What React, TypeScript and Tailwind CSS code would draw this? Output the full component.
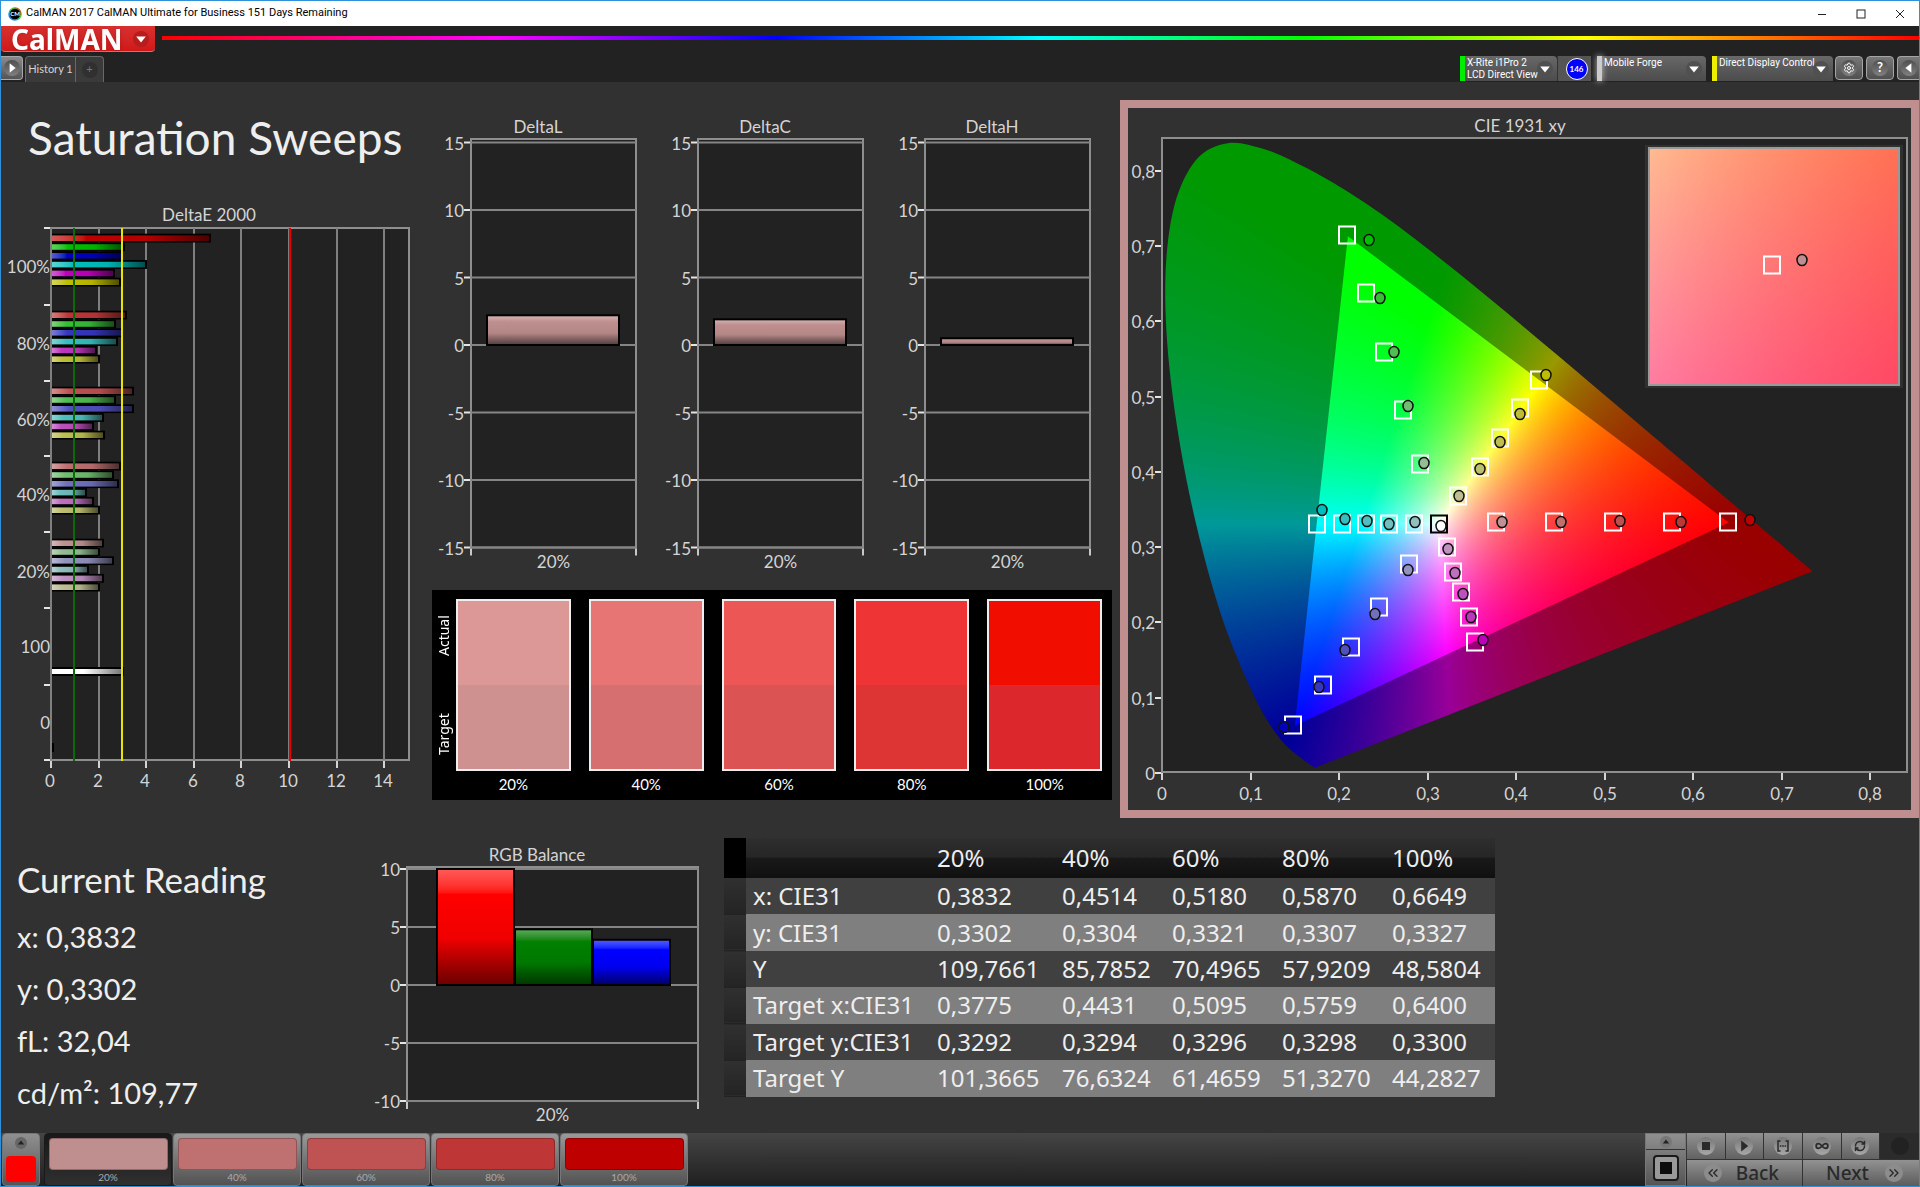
import { useEffect, useRef } from "react";
import type { ReactNode } from "react";
import { ChevronsLeft, ChevronsRight, Infinity as InfinityIcon, RefreshCw, Settings } from "lucide-react";

type Column = { x: number; w: number; value: number; color: string };
type Point = [number, number];

const LEVELS = ["20%", "40%", "60%", "80%", "100%"];

// Low channel of the stimulus colour per saturation level, 100% first
const LOW_CHANNEL = [0, 54, 80, 112, 146];
const HUES = [
	[1, 0, 0],
	[0, 1, 0],
	[0, 0, 1],
	[0, 1, 1],
	[1, 0, 1],
	[1, 1, 0],
];

const stimulus = (hue: number, level: number) =>
	`rgb(${HUES[hue].map((on) => (on ? 190 : LOW_CHANNEL[level])).join(",")})`;

const DELTA_E = [
	{ label: "100%", y: 238, ends: [210, 124, 122, 146, 114, 120] },
	{ label: "80%", y: 315, ends: [126, 115, 122, 117, 96, 99] },
	{ label: "60%", y: 391, ends: [133, 115, 133, 103, 93, 104] },
	{ label: "40%", y: 466, ends: [120, 113, 118, 86, 93, 99] },
	{ label: "20%", y: 543, ends: [103, 99, 113, 88, 103, 99] },
];

const TABLE_ROWS = [
	{ label: "x: CIE31", values: ["0,3832", "0,4514", "0,5180", "0,5870", "0,6649"] },
	{ label: "y: CIE31", values: ["0,3302", "0,3304", "0,3321", "0,3307", "0,3327"] },
	{ label: "Y", values: ["109,7661", "85,7852", "70,4965", "57,9209", "48,5804"] },
	{ label: "Target x:CIE31", values: ["0,3775", "0,4431", "0,5095", "0,5759", "0,6400"] },
	{ label: "Target y:CIE31", values: ["0,3292", "0,3294", "0,3296", "0,3298", "0,3300"] },
	{ label: "Target Y", values: ["101,3665", "76,6324", "61,4659", "51,3270", "44,2827"] },
];

const SWATCHES = [
	{ actual: "bg-[#dc9896]", target: "bg-[#cf9190]", step: "bg-[#bf8f8f]" },
	{ actual: "bg-[#e67573]", target: "bg-[#d67070]", step: "bg-[#bf7070]" },
	{ actual: "bg-[#ec5755]", target: "bg-[#db5352]", step: "bg-[#bf5252]" },
	{ actual: "bg-[#ee3434]", target: "bg-[#dd3534]", step: "bg-[#bf3636]" },
	{ actual: "bg-[#f10d00]", target: "bg-[#dc272c]", step: "bg-[#bf0000]" },
];

const LOCUS: Point[] = [
	[0.1741, 0.005], [0.1714, 0.0051], [0.1644, 0.0109], [0.1566, 0.0177], [0.144, 0.0297],
	[0.1355, 0.0399], [0.1241, 0.0578], [0.1096, 0.0868], [0.0913, 0.1327], [0.0687, 0.2007],
	[0.0454, 0.295], [0.0235, 0.4127], [0.0082, 0.5384], [0.0039, 0.6548], [0.0139, 0.7502],
	[0.0389, 0.812], [0.0743, 0.8338], [0.1142, 0.8262], [0.1547, 0.8059], [0.1929, 0.7816],
	[0.2296, 0.7543], [0.2658, 0.7243], [0.3016, 0.6923], [0.3373, 0.6589], [0.3731, 0.6245],
	[0.4087, 0.5896], [0.4441, 0.5547], [0.4788, 0.5202], [0.5125, 0.4866], [0.5448, 0.4544],
	[0.5752, 0.4242], [0.627, 0.3725], [0.6658, 0.334], [0.6915, 0.3083], [0.719, 0.2809],
	[0.7347, 0.2653],
];

const GAMUT: Point[] = [[0.64, 0.33], [0.21, 0.71], [0.15, 0.06]];

// Marker positions in chart units, 100% first, in the order of HUES
const TARGETS: Point[][] = [
	[[1728, 522], [1672, 522], [1613, 522], [1554, 522], [1496, 522]],
	[[1347, 235], [1366, 293], [1384, 352], [1403, 410], [1420, 464]],
	[[1293, 725], [1323, 685], [1351, 647], [1379, 607], [1409, 564]],
	[[1317, 524], [1342, 524], [1366, 524], [1389, 524], [1414, 524]],
	[[1475, 642], [1469, 617], [1461, 592], [1453, 572], [1447, 547]],
	[[1539, 380], [1520, 408], [1500, 438], [1480, 467], [1458, 496]],
];
const MEASURED: Point[][] = [
	[[1750, 520], [1681, 522], [1620, 521], [1561, 522], [1502, 522]],
	[[1369, 240], [1380, 298], [1394, 352], [1408, 406], [1424, 463]],
	[[1284, 727], [1319, 687], [1345, 650], [1375, 614], [1408, 570]],
	[[1322, 510], [1345, 519], [1367, 521], [1389, 524], [1415, 522]],
	[[1483, 640], [1471, 617], [1463, 594], [1455, 573], [1448, 549]],
	[[1546, 375], [1520, 414], [1500, 442], [1480, 469], [1459, 496]],
];

// Brightest displayable linear sRGB colour for a chromaticity
const xyToRgb = (x: number, y: number) => {
	const X = x / Math.max(y, 0.0001);
	const Z = (1 - x - y) / Math.max(y, 0.0001);
	const rgb = [
		3.2406 * X - 1.5372 - 0.4986 * Z,
		-0.9689 * X + 1.8758 + 0.0415 * Z,
		0.0557 * X - 0.204 + 1.057 * Z,
	].map((c) => Math.max(0, c));
	const max = Math.max(...rgb);
	return rgb.map((c) => (c / max) * 255);
};

const Chromaticity = ({
	width,
	height,
	x0,
	y0,
	scaleX,
	scaleY,
	locus = false,
}: {
	width: number;
	height: number;
	x0: number;
	y0: number;
	scaleX: number;
	scaleY: number;
	locus?: boolean;
}) => {
	const ref = useRef<HTMLCanvasElement>(null);

	useEffect(() => {
		const ctx = ref.current?.getContext("2d");
		if (!ctx) {
			return;
		}
		const image = ctx.createImageData(width, height);
		for (let py = 0; py < height; py++) {
			for (let px = 0; px < width; px++) {
				const [r, g, b] = xyToRgb(x0 + px / scaleX, y0 + (height - py) / scaleY);
				image.data.set([r, g, b, 255], (py * width + px) * 4);
			}
		}
		ctx.putImageData(image, 0, 0);
		if (!locus) {
			return;
		}

		const toPx = ([x, y]: Point): Point => [(x - x0) * scaleX, height - (y - y0) * scaleY];
		const outline = new Path2D();
		const pts = LOCUS.map(toPx);
		outline.moveTo(...pts[0]);
		for (let i = 0; i < pts.length - 1; i++) {
			const prev = pts[Math.max(i - 1, 0)];
			const a = pts[i];
			const b = pts[i + 1];
			const next = pts[Math.min(i + 2, pts.length - 1)];
			outline.bezierCurveTo(
				a[0] + (b[0] - prev[0]) / 6,
				a[1] + (b[1] - prev[1]) / 6,
				b[0] - (next[0] - a[0]) / 6,
				b[1] - (next[1] - a[1]) / 6,
				b[0],
				b[1],
			);
		}
		outline.closePath();

		// Darken everything outside the gamut triangle, then cut to the locus
		const outside = new Path2D();
		outside.rect(0, 0, width, height);
		GAMUT.map(toPx).forEach(([x, y], i) => (i ? outside.lineTo(x, y) : outside.moveTo(x, y)));
		outside.closePath();
		ctx.fillStyle = "rgba(0,0,0,0.4)";
		ctx.fill(outside, "evenodd");
		ctx.globalCompositeOperation = "destination-in";
		ctx.fillStyle = "#000";
		ctx.fill(outline);
		ctx.globalCompositeOperation = "source-over";
	}, [width, height, x0, y0, scaleX, scaleY, locus]);

	return <canvas ref={ref} width={width} height={height} className="block" />;
};

const Glossy = ({ id, color, vertical = false }: { id: string; color: string; vertical?: boolean }) => (
	<linearGradient id={id} x1="0" y1="0" x2={vertical ? 0 : 1} y2={vertical ? 1 : 0}>
		<stop offset="0" stopColor={`color-mix(in srgb, ${color}, white 35%)`} />
		<stop offset="0.22" stopColor={color} />
		<stop offset="0.6" stopColor={`color-mix(in srgb, ${color}, black 6%)`} />
		<stop offset="1" stopColor={`color-mix(in srgb, ${color}, black 58%)`} />
	</linearGradient>
);

const DeltaEChart = () => (
	<svg viewBox="1 200 424 610" className="block w-full fill-[#d4d4d4] text-[17px]">
		<text x="209" y="221" textAnchor="middle">DeltaE 2000</text>
		<rect x="51" y="228" width="358" height="532" fill="#222" stroke="#8e8e8e" strokeWidth="2" />
		{[0, 2, 4, 6, 8, 10, 12, 14].map((v) => {
			const x = Math.round(51 + v * 23.8);
			return (
				<g key={v}>
					<line x1={x} x2={x} y1="228" y2="760" stroke="#7f7f7f" strokeWidth="2" />
					<line x1={x} x2={x} y1="761" y2="768" stroke="#d4d4d4" strokeWidth="2" />
					<text x={x - 1} y="787" textAnchor="middle">{v}</text>
				</g>
			);
		})}
		{[228, 305, 381, 456, 532, 608, 685, 760].map((y) => (
			<line key={y} x1="44" x2="50" y1={y} y2={y} stroke="#e4e4e4" strokeWidth="2" />
		))}
		{DELTA_E.map((group, level) => (
			<g key={group.label}>
				<text x="50" y={group.y + 35} textAnchor="end">{group.label}</text>
				{group.ends.map((end, hue) => {
					const id = `de-${level}-${hue}`;
					const y = group.y + hue * 8.8;
					return (
						<g key={id}>
							<Glossy id={id} color={stimulus(hue, level)} />
							<rect x="52" y={y - 4.3} width={end - 51} height="8.8" fill="#000" />
							<rect x="52" y={y - 2.6} width={end - 53} height="5.6" fill={`url(#${id})`} />
						</g>
					);
				})}
			</g>
		))}
		<text x="50" y="653" textAnchor="end">100</text>
		<text x="50" y="729" textAnchor="end">0</text>
		<linearGradient id="de-white">
			<stop offset="0.45" stopColor="#fff" />
			<stop offset="1" stopColor="#777" />
		</linearGradient>
		<rect x="52" y="667" width="72" height="9" fill="#000" />
		<rect x="52" y="669" width="70" height="5" fill="url(#de-white)" />
		<rect x="52" y="743" width="2" height="9" fill="#000" />
		<line x1="74" x2="74" y1="228" y2="761" stroke="#0a6a0a" strokeWidth="2" />
		<line x1="122" x2="122" y1="228" y2="761" stroke="#e8e400" strokeWidth="2" />
		<line x1="290" x2="290" y1="228" y2="761" stroke="#e80000" strokeWidth="2" />
	</svg>
);

const ColumnChart = ({
	title,
	titleX,
	width,
	height,
	left,
	right,
	top,
	zero,
	unit,
	ticks,
	columns,
}: {
	title: string;
	titleX: number;
	width: number;
	height: number;
	left: number;
	right: number;
	top: number;
	zero: number;
	unit: number;
	ticks: number[];
	columns: Column[];
}) => {
	const bottom = zero - ticks[0] * unit;
	const slug = title.replace(" ", "");

	return (
		<svg viewBox={`0 0 ${width} ${height}`} className="block w-full fill-[#d4d4d4] text-[17px]">
			<text x={titleX} y={top - 6} textAnchor="middle">{title}</text>
			<rect x={left} y={top} width={right - left} height={bottom - top} fill="#222" stroke="#8e8e8e" strokeWidth="2" />
			{ticks.map((v) => (
				<g key={v}>
					<line x1={left} x2={right} y1={zero - v * unit} y2={zero - v * unit} stroke="#858585" strokeWidth="2" />
					<line x1={left - 7} x2={left - 1} y1={zero - v * unit} y2={zero - v * unit} stroke="#e4e4e4" strokeWidth="2" />
					<text x={left - 7} y={zero - v * unit + 7} textAnchor="end">{v}</text>
				</g>
			))}
			{[left, right].map((x) => (
				<line key={x} x1={x} x2={x} y1={bottom + 1} y2={bottom + 8} stroke="#c8c8c8" strokeWidth="2" />
			))}
			{columns.map((c, i) => (
				<g key={c.color}>
					<Glossy id={`${slug}-${i}`} color={c.color} vertical />
					<rect
						x={c.x}
						y={zero - c.value * unit}
						width={c.w}
						height={c.value * unit}
						fill={`url(#${slug}-${i})`}
						stroke="#000"
						strokeWidth="2"
					/>
				</g>
			))}
			<text x={(left + right) / 2} y={bottom + 20} textAnchor="middle">20%</text>
		</svg>
	);
};

const Marker = ({ at, color }: { at: Point; color: string }) => (
	<ellipse cx={at[0]} cy={at[1]} rx="5" ry="5.5" fill={color} stroke="#111" strokeWidth="1.5" />
);

const TargetBox = ({ at, color = "#fff" }: { at: Point; color?: string }) => (
	<rect x={at[0] - 8} y={at[1] - 8.5} width="16" height="17" fill="none" stroke={color} strokeWidth="2" />
);

const CieChart = () => (
	<svg viewBox="1128 108 783 702" className="block w-full fill-[#d4d4d4] text-[17px]">
		<text x="1520" y="132" textAnchor="middle">CIE 1931 xy</text>
		<rect x="1162" y="138" width="745" height="634" fill="#222" stroke="#8e8e8e" strokeWidth="2" />
		{[0, 1, 2, 3, 4, 5, 6, 7, 8].map((v) => {
			const x = Math.round(1162 + v * 88.55);
			const y = Math.round(773 - v * 75.3);
			const label = v ? `0,${v}` : "0";
			return (
				<g key={v}>
					<line x1={x} x2={x} y1="773" y2="780" stroke="#d4d4d4" strokeWidth="2" />
					<text x={x} y="800" textAnchor="middle">{label}</text>
					<line x1="1155" x2="1161" y1={y} y2={y} stroke="#e4e4e4" strokeWidth="2" />
					<text x="1155" y={y + 7} textAnchor="end">{label}</text>
				</g>
			);
		})}
		<foreignObject x="1163" y="139" width="743" height="632">
			<Chromaticity width={743} height={632} x0={0.0012} y0={0} scaleX={885.5} scaleY={753} locus />
		</foreignObject>
		{TARGETS.map((points, hue) => points.map((at) => <TargetBox key={`${hue}-${at}`} at={at} />))}
		<TargetBox at={[1439, 524]} color="#000" />
		{MEASURED.map((points, hue) =>
			points.map((at, level) => <Marker key={`${hue}-${at}`} at={at} color={stimulus(hue, level)} />),
		)}
		<Marker at={[1441, 526]} color="#fff" />
		<rect x="1645" y="145" width="258" height="243" fill="#303030" />
		<foreignObject x="1648" y="147" width="252" height="238">
			<Chromaticity width={252} height={238} x0={0.3525} y0={0.3055} scaleX={5040} scaleY={5000} />
		</foreignObject>
		<rect x="1649" y="148" width="250" height="237" fill="none" stroke="#999" strokeWidth="2" />
		<TargetBox at={[1772, 265]} />
		<Marker at={[1802, 260]} color="#bf8f8f" />
	</svg>
);

const Knob = ({ children }: { children: ReactNode }) => (
	<span className="flex size-4 items-center justify-center rounded-full bg-linear-to-b from-[#505050] to-[#808080]">
		{children}
	</span>
);

const Triangle = ({ className }: { className: string }) => (
	<svg viewBox="0 0 10 10" className={className}>
		<path d="M1 3h8L5 8z" fill="currentColor" />
	</svg>
);

const DeviceMenu = ({ children, accent, className }: { children: ReactNode; accent: string; className: string }) => (
	<button
		type="button"
		className={`flex h-[25px] items-stretch rounded-t-sm bg-linear-to-b from-[#686868] to-[#4c4c4c] text-left font-[Roboto,sans-serif] text-[10px] leading-3 text-white ${className}`}
	>
		<span className={`mr-[2px] w-[5px] shrink-0 ${accent}`} />
		<span className="min-w-0 flex-1 pt-[1px] whitespace-nowrap">{children}</span>
		<span className="mr-1 flex size-4 shrink-0 items-center justify-center self-center rounded-full bg-[#505050]">
			<Triangle className="size-3" />
		</span>
	</button>
);

const TOOL_BUTTON =
	"flex h-6 w-7 items-center justify-center rounded-sm border border-[#a5a5a5] bg-linear-to-b from-[#787878] to-[#505050] text-white";

const TitleBar = () => (
	<header className="flex h-[25px] items-center bg-white pl-[7px] text-black">
		<svg viewBox="0 0 14 14" className="mr-1 size-[14px]">
			<defs>
				<linearGradient id="ring" x1="0" y1="1" x2="1" y2="0">
					<stop offset="0" stopColor="#2040ff" />
					<stop offset="0.35" stopColor="#00c8d0" />
					<stop offset="0.6" stopColor="#40d020" />
					<stop offset="1" stopColor="#f02020" />
				</linearGradient>
			</defs>
			<circle cx="7" cy="7" r="6" fill="#000" stroke="url(#ring)" strokeWidth="1.5" />
			<text x="7" y="9" textAnchor="middle" fill="#fff" className="text-[6px] font-bold">CM</text>
		</svg>
		<h1 className="flex-1 font-[Roboto,sans-serif] text-[11px]">
			CalMAN 2017 CalMAN Ultimate for Business 151 Days Remaining
		</h1>
		<div className="flex gap-[9px] pr-1">
			<button type="button" aria-label="Minimize" className="flex h-6 w-[30px] items-center justify-center">
				<svg viewBox="0 0 10 10" className="size-[10px]" stroke="#222" fill="none"><path d="M1 5.5h8" /></svg>
			</button>
			<button type="button" aria-label="Maximize" className="flex h-6 w-[30px] items-center justify-center">
				<svg viewBox="0 0 10 10" className="size-[10px]" stroke="#222" fill="none"><rect x="1" y="1" width="8" height="8" /></svg>
			</button>
			<button type="button" aria-label="Close" className="flex h-6 w-[30px] items-center justify-center">
				<svg viewBox="0 0 10 10" className="size-[10px]" stroke="#222" fill="none"><path d="M1 1l8 8M9 1L1 9" /></svg>
			</button>
		</div>
	</header>
);

const Toolbar = () => (
	<div className="bg-[#222]">
		<div className="flex h-[26px] items-start gap-[7px]">
			<button
				type="button"
				className="flex h-[26px] w-[154px] items-center justify-between rounded-b-sm border-b border-[#b08080] bg-linear-to-b from-[#d83030] to-[#d01818] pr-[6px] pl-[10px] font-['Noto_Sans',sans-serif] text-[28px] leading-none font-bold text-white"
			>
				<span className="drop-shadow-sm">CalMAN</span>
				<span className="flex size-4 items-center justify-center rounded-full bg-[#b81c1c]">
					<Triangle className="size-3" />
				</span>
			</button>
			<div className="mt-[10px] h-1 flex-1 bg-[linear-gradient(90deg,#f00_0%,#f0f_19%,#00f_35%,#0ff_50%,#0f0_65%,#ff0_81%,#f00_100%)]" />
		</div>
		<div className="flex h-[30px] items-end justify-between">
			<div className="flex h-[26px] items-start gap-[2px]">
				<button
					type="button"
					aria-label="Expand"
					className="flex h-6 w-[22px] items-center justify-center rounded-r-sm border border-l-0 border-[#a8a8a8] bg-linear-to-b from-[#8a8a8a] to-[#555] text-white"
				>
					<Knob><Triangle className="size-3 -rotate-90" /></Knob>
				</button>
				<div className="flex h-[26px] rounded-t-sm border border-b-0 border-[#686868] bg-[#3a3a3a] text-[11px] text-[#d4d4d4]">
					<button type="button" className="w-[50px] border-r border-[#686868] text-center whitespace-nowrap">History 1</button>
					<button type="button" aria-label="Add history" className="flex w-[27px] items-center justify-center">
						<span className="flex size-4 items-center justify-center rounded-full bg-[#303030] text-[#777]">+</span>
					</button>
				</div>
			</div>
			<div className="flex h-[26px] items-start">
				<DeviceMenu accent="bg-[#0e0]" className="w-[97px]">
					X-Rite i1Pro 2<br />LCD Direct View
				</DeviceMenu>
				<span className="flex h-[25px] w-[34px] items-center justify-center border-l border-[#333] bg-[#555] pl-1">
					<span className="flex size-[22px] items-center justify-center rounded-full border border-white bg-[#00f] text-[8px] font-bold text-white">
						146
					</span>
				</span>
				<DeviceMenu accent="bg-[#ccc] shadow-[0_0_6px_#ccc]" className="ml-[6px] w-[109px]">Mobile Forge</DeviceMenu>
				<DeviceMenu accent="bg-[#ee0]" className="ml-[6px] w-[121px]">Direct Display Control</DeviceMenu>
				<div className="ml-[2px] flex gap-[3px]">
					<button type="button" aria-label="Settings" className={TOOL_BUTTON}>
						<Knob><Settings className="size-3" /></Knob>
					</button>
					<button type="button" className={`${TOOL_BUTTON} text-[13px] font-bold`}>
						<Knob>?</Knob>
					</button>
					<button
						type="button"
						aria-label="Collapse"
						className="flex h-6 w-[22px] items-center justify-center rounded-l-sm border border-r-0 border-[#a5a5a5] bg-linear-to-b from-[#787878] to-[#505050] text-white"
					>
						<Knob><Triangle className="size-3 rotate-90" /></Knob>
					</button>
				</div>
			</div>
		</div>
	</div>
);

const ColorCompare = () => (
	<div className="mr-[1px] ml-[7px] flex h-[210px] bg-black pt-[9px] pr-[10px] text-[15px] text-white">
		<div className="flex h-[172px] w-6 shrink-0 rotate-180 items-center justify-between px-4 font-['Noto_Sans',sans-serif] text-[14px] leading-5 [writing-mode:vertical-rl]">
			<span>Target</span>
			<span>Actual</span>
		</div>
		<div className="grid flex-1 grid-cols-5 gap-[18px]">
			{SWATCHES.map((s, i) => (
				<div key={LEVELS[i]} className="text-center">
					<div className="flex h-[172px] flex-col border-2 border-[#eee]">
						<div className={`flex-1 ${s.actual}`} />
						<div className={`flex-1 ${s.target}`} />
					</div>
					<div className="leading-[26px]">{LEVELS[i]}</div>
				</div>
			))}
		</div>
	</div>
);

const ReadingsTable = () => (
	<table className="h-[259px] border-collapse font-['Noto_Sans',sans-serif] text-[24px] leading-8 text-[#eee]">
		<thead>
			<tr className="h-10 bg-[linear-gradient(#2e2e2e_0%,#262626_48%,#191919_50%,#101010_100%)]">
				<td className="w-[22px] bg-black" />
				<td className="w-[184px]" />
				{LEVELS.map((level, i) => (
					<th key={level} className={`pl-[7px] text-left font-normal ${i === 0 ? "w-[125px]" : "w-[110px]"}`}>
						{level}
					</th>
				))}
			</tr>
		</thead>
		<tbody>
			{TABLE_ROWS.map((row, i) => (
				<tr key={row.label} className={i % 2 ? "bg-[#7f7f7f]" : "bg-[#404040]"}>
					<td className="border-b border-[#222] bg-linear-to-b from-[#303030] to-[#242424]" />
					<th className="pl-[7px] text-left font-normal whitespace-nowrap">{row.label}</th>
					{row.values.map((value, col) => (
						<td key={col} className="pl-[7px]">{value}</td>
					))}
				</tr>
			))}
		</tbody>
	</table>
);

const StepButton = ({ label, color, active }: { label: string; color: string; active: boolean }) => (
	<button
		type="button"
		className={`flex h-[53px] w-32 flex-col items-center rounded-sm border pt-1 text-[10px] leading-[15px] text-[#aaa] ${
			active
				? "border-[#1a1a1a] bg-linear-to-b from-[#181818] to-[#303030]"
				: "border-[#777] bg-linear-to-b from-[#9a9a9a] to-[#525252]"
		}`}
	>
		<span className={`h-8 w-[119px] rounded-sm border border-black/25 ${color}`} />
		{label}
	</button>
);

const TransportButton = ({ label, children }: { label: string; children?: ReactNode }) => (
	<button
		type="button"
		aria-label={label}
		className="flex h-[26px] items-center justify-center border-r border-[#333] bg-linear-to-b from-[#929292] to-[#626262] text-[#2a2a2a]"
	>
		<span className="flex size-[18px] items-center justify-center rounded-full bg-linear-to-b from-[#777] to-[#a8a8a8]">
			{children}
		</span>
	</button>
);

const BottomBar = () => (
	<footer className="flex h-[53px] justify-between bg-linear-to-b from-[#454545] to-[#202020] pl-[1px]">
		<div className="flex gap-[1px]">
			<button
				type="button"
				aria-label="Current color"
				className="mr-[3px] flex h-[53px] w-[38px] flex-col items-center justify-between rounded-sm border border-[#777] bg-linear-to-b from-[#909090] to-[#555] py-[3px] text-[#222]"
			>
				<span className="flex size-3 items-center justify-center rounded-full bg-[#666]">
					<Triangle className="size-2 rotate-180" />
				</span>
				<span className="h-[26px] w-[30px] rounded-sm bg-[#f00]" />
			</button>
			{LEVELS.map((level, i) => (
				<StepButton key={level} label={level} color={SWATCHES[i].step} active={i === 0} />
			))}
		</div>
		<div className="flex gap-[1px]">
			<div className="flex w-[41px] flex-col border border-[#777] bg-linear-to-b from-[#909090] to-[#555] text-[#222]">
				<button type="button" aria-label="Show more" className="flex h-4 items-center justify-center border-b border-[#333]">
					<span className="flex size-3 items-center justify-center rounded-full bg-[#777]">
						<Triangle className="size-2 rotate-180" />
					</span>
				</button>
				<button type="button" aria-label="Window pattern" className="flex flex-1 items-center justify-center">
					<span className="flex size-[26px] items-center justify-center rounded-sm border-2 border-[#1a1a1a] bg-[#999]">
						<span className="size-3 bg-[#0c0c0c]" />
					</span>
				</button>
			</div>
			<div className="w-[232px]">
				<div className="grid grid-cols-6">
					<TransportButton label="Stop"><span className="size-2 bg-[#2a2a2a]" /></TransportButton>
					<TransportButton label="Play"><Triangle className="size-[14px] -rotate-90" /></TransportButton>
					<TransportButton label="Read series">
						<svg viewBox="0 0 12 12" className="size-3" fill="none" stroke="currentColor" strokeWidth="1.5">
							<path d="M3.500 1H1v10h2.500M8.500 1H11v10H8.500M2.800 6h1.600M5.200 6h1.600M7.600 6h1.600" />
						</svg>
					</TransportButton>
					<TransportButton label="Read continuously"><InfinityIcon className="size-[14px]" strokeWidth={3} /></TransportButton>
					<TransportButton label="Refresh"><RefreshCw className="size-3" strokeWidth={3} /></TransportButton>
					<span className="flex items-center justify-center bg-[#2b2b2b]">
						<span className="size-[18px] rounded-full bg-[#222]" />
					</span>
				</div>
				<div className="grid grid-cols-2 font-['Noto_Sans',sans-serif] text-[19px] leading-6 font-medium text-[#2a2a2a]">
					<button
						type="button"
						className="flex h-[27px] items-center justify-between border-t border-r border-[#333] bg-linear-to-b from-[#929292] to-[#5c5c5c] pr-[23px] pl-[17px]"
					>
						<span className="flex size-[18px] items-center justify-center rounded-full bg-[#8c8c8c]"><ChevronsLeft className="size-4" /></span>
						Back
					</button>
					<button
						type="button"
						className="flex h-[27px] items-center justify-between border-t border-[#333] bg-linear-to-b from-[#929292] to-[#5c5c5c] pr-4 pl-[23px]"
					>
						Next
						<span className="flex size-[18px] items-center justify-center rounded-full bg-[#8c8c8c]"><ChevronsRight className="size-4" /></span>
					</button>
				</div>
			</div>
		</div>
	</footer>
);

const DELTA_CHARTS = [
	{ title: "DeltaL", value: 2.2 },
	{ title: "DeltaC", value: 1.9 },
	{ title: "DeltaH", value: 0.5 },
];

export default function App() {
	return (
		<div className="flex min-h-screen flex-col border border-[#2f92d8] bg-[#313131] font-[Lato,sans-serif]">
			<TitleBar />
			<Toolbar />
			<main className="flex-1">
				<section className="grid grid-cols-[424fr_688fr_806fr]">
					<div>
						<h2 className="flex h-[118px] items-center pb-2 pl-[27px] text-[46px] text-[#eee]">Saturation Sweeps</h2>
						<DeltaEChart />
					</div>
					<div className="pt-7">
						<div className="mb-[10px] grid grid-cols-3 pr-[7px]">
							{DELTA_CHARTS.map(({ title, value }) => (
								<ColumnChart
									key={title}
									title={title}
									titleX={113}
									width={227}
									height={470}
									left={46}
									right={211}
									top={29}
									zero={235}
									unit={13.5}
									ticks={[-15, -10, -5, 0, 5, 10, 15]}
									columns={[{ x: 62, w: 132, value, color: "#bf8f8f" }]}
								/>
							))}
						</div>
						<ColorCompare />
					</div>
					<div className="pt-[18px] pl-[7px]">
						<div className="border-8 border-[#bf8f8f]">
							<CieChart />
						</div>
					</div>
				</section>
				<section className="flex items-start pt-[10px]">
					<div className="w-[367px] pt-[23px] pl-4 text-[29px] leading-[52px] text-[#eee]">
						<h3 className="mb-1 text-[35px] leading-[56px]">Current Reading</h3>
						<p>x: 0,3832</p>
						<p>y: 0,3302</p>
						<p>fL: 32,04</p>
						<p>cd/m²: 109,77</p>
					</div>
					<div className="w-[340px]">
						<ColumnChart
							title="RGB Balance"
							titleX={169}
							width={340}
							height={298}
							left={39}
							right={330}
							top={39}
							zero={157}
							unit={11.6}
							ticks={[-10, -5, 0, 5, 10]}
							columns={[
								{ x: 69, w: 77, value: 10, color: "#ff0000" },
								{ x: 147, w: 77, value: 4.8, color: "#008000" },
								{ x: 225, w: 77, value: 3.9, color: "#0000ff" },
							]}
						/>
					</div>
					<div className="pt-[10px] pl-4">
						<ReadingsTable />
					</div>
				</section>
			</main>
			<BottomBar />
		</div>
	);
}
